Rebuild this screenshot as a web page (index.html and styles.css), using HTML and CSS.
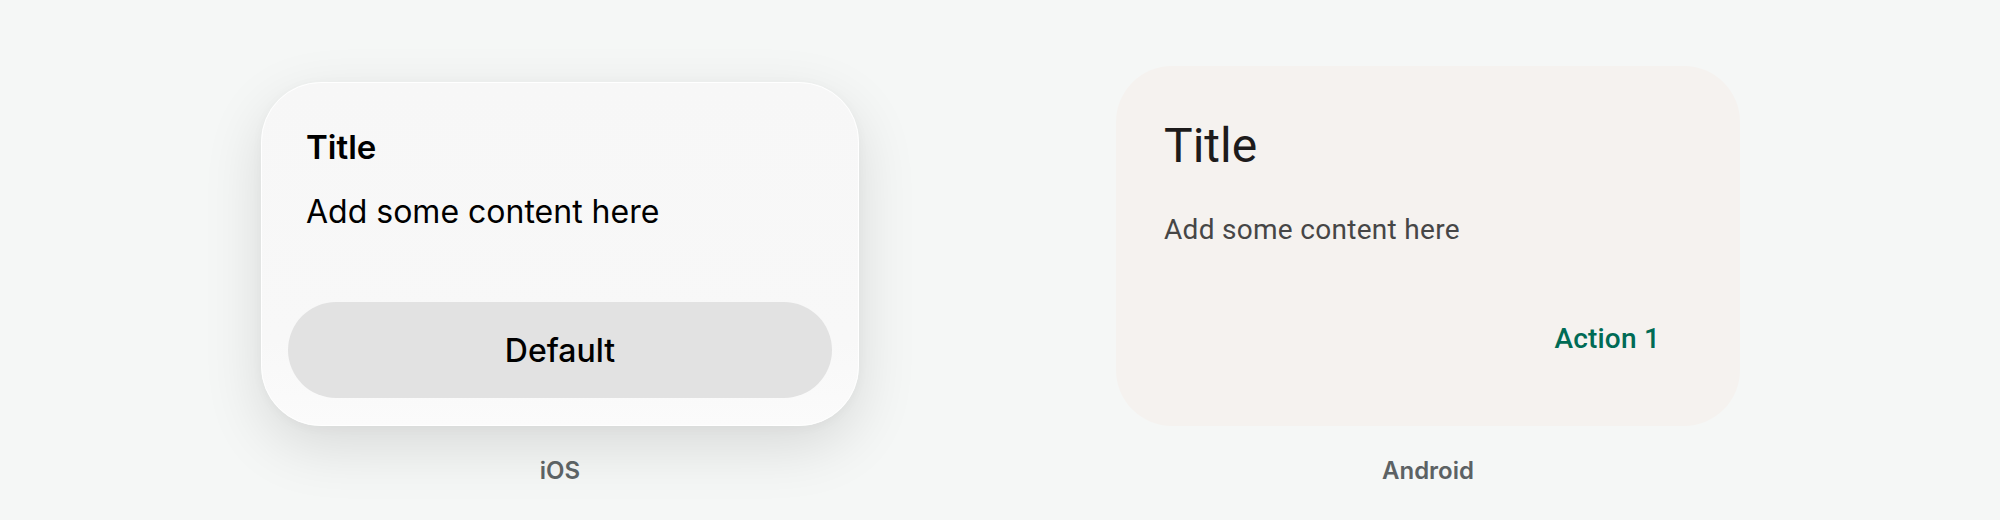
FILE: index.html
```html
<!DOCTYPE html>
<html lang="en">
<head>
<meta charset="utf-8">
<title>Dialogs</title>
<link rel="stylesheet" href="styles.css">
</head>
<body>
<main class="stage">
  <section class="col">
    <div class="ios-card">
      <div class="ios-text">
        <h2 class="ios-title">Title</h2>
        <p class="ios-body">Add some content here</p>
      </div>
      <button class="ios-btn" type="button">Default</button>
    </div>
    <div class="label">iOS</div>
  </section>
  <section class="col">
    <div class="md-card">
      <h2 class="md-title">Title</h2>
      <p class="md-body">Add some content here</p>
      <div class="md-actions">
        <button class="md-btn" type="button">Action 1</button>
      </div>
    </div>
    <div class="label">Android</div>
  </section>
</main>
</body>
</html>
```
FILE: styles.css
```css
html, body {
  margin: 0;
  padding: 0;
}
body {
  background: #f5f7f6;
  width: 2000px;
  height: 520px;
  overflow: hidden;
}
.stage {
  display: grid;
  grid-template-columns: 868px 868px;
  margin-left: 126px;
  padding-top: 66px;
}
.col {
  display: flex;
  flex-direction: column;
  align-items: center;
  justify-content: flex-end;
}

/* iOS */
.ios-card {
  box-sizing: border-box;
  width: 598px;
  background: linear-gradient(180deg, #f7f7f7 0%, #f8f8f8 75%, #fbfbfb 100%);
  border: 1.5px solid #ffffff;
  border-radius: 60px;
  box-shadow: 0 20px 60px rgba(0, 0, 0, 0.12), 0 2px 12px rgba(0, 0, 0, 0.03);
  padding: 42px 26px 27px 26px;
  font-family: Inter, "Liberation Sans", sans-serif;
  color: #000;
  display: flex;
  flex-direction: column;
}
.ios-text {
  padding: 0 18px;
}
.ios-title {
  margin: 0;
  font-size: 33px;
  line-height: 44px;
  font-weight: 600;
}
.ios-body {
  margin: 21px 0 0 0;
  font-size: 32px;
  line-height: 44px;
  font-weight: 400;
}
.ios-btn {
  margin-top: 68px;
  height: 96px;
  border: none;
  border-radius: 48px;
  background: #e2e2e2;
  font-family: Inter, "Liberation Sans", sans-serif;
  font-size: 32px;
  font-weight: 500;
  color: #000;
  display: flex;
  align-items: center;
  justify-content: center;
  padding: 0;
}

/* Android */
.md-card {
  box-sizing: border-box;
  width: 624px;
  background: #f5f2ef;
  border-radius: 56px;
  padding: 48px;
  font-family: Roboto, "Liberation Sans", sans-serif;
}
.md-title {
  margin: 0;
  font-size: 48px;
  line-height: 64px;
  font-weight: 400;
  color: #1d1b1b;
}
.md-body {
  margin: 32px 0 0 0;
  font-size: 28px;
  line-height: 40px;
  font-weight: 400;
  color: #464646;
  letter-spacing: 0.3px;
}
.md-actions {
  margin-top: 48px;
  display: flex;
  justify-content: flex-end;
}
.md-btn {
  height: 80px;
  border: none;
  background: transparent;
  padding: 0 32px 0 24px;
  font-family: Roboto, "Liberation Sans", sans-serif;
  font-size: 28px;
  font-weight: 500;
  letter-spacing: 0.2px;
  color: #006b55;
}

.label {
  margin-top: 29px;
  font-family: Inter, "Liberation Sans", sans-serif;
  font-size: 24px;
  line-height: 32px;
  font-weight: 600;
  color: #5c6264;
}
```
